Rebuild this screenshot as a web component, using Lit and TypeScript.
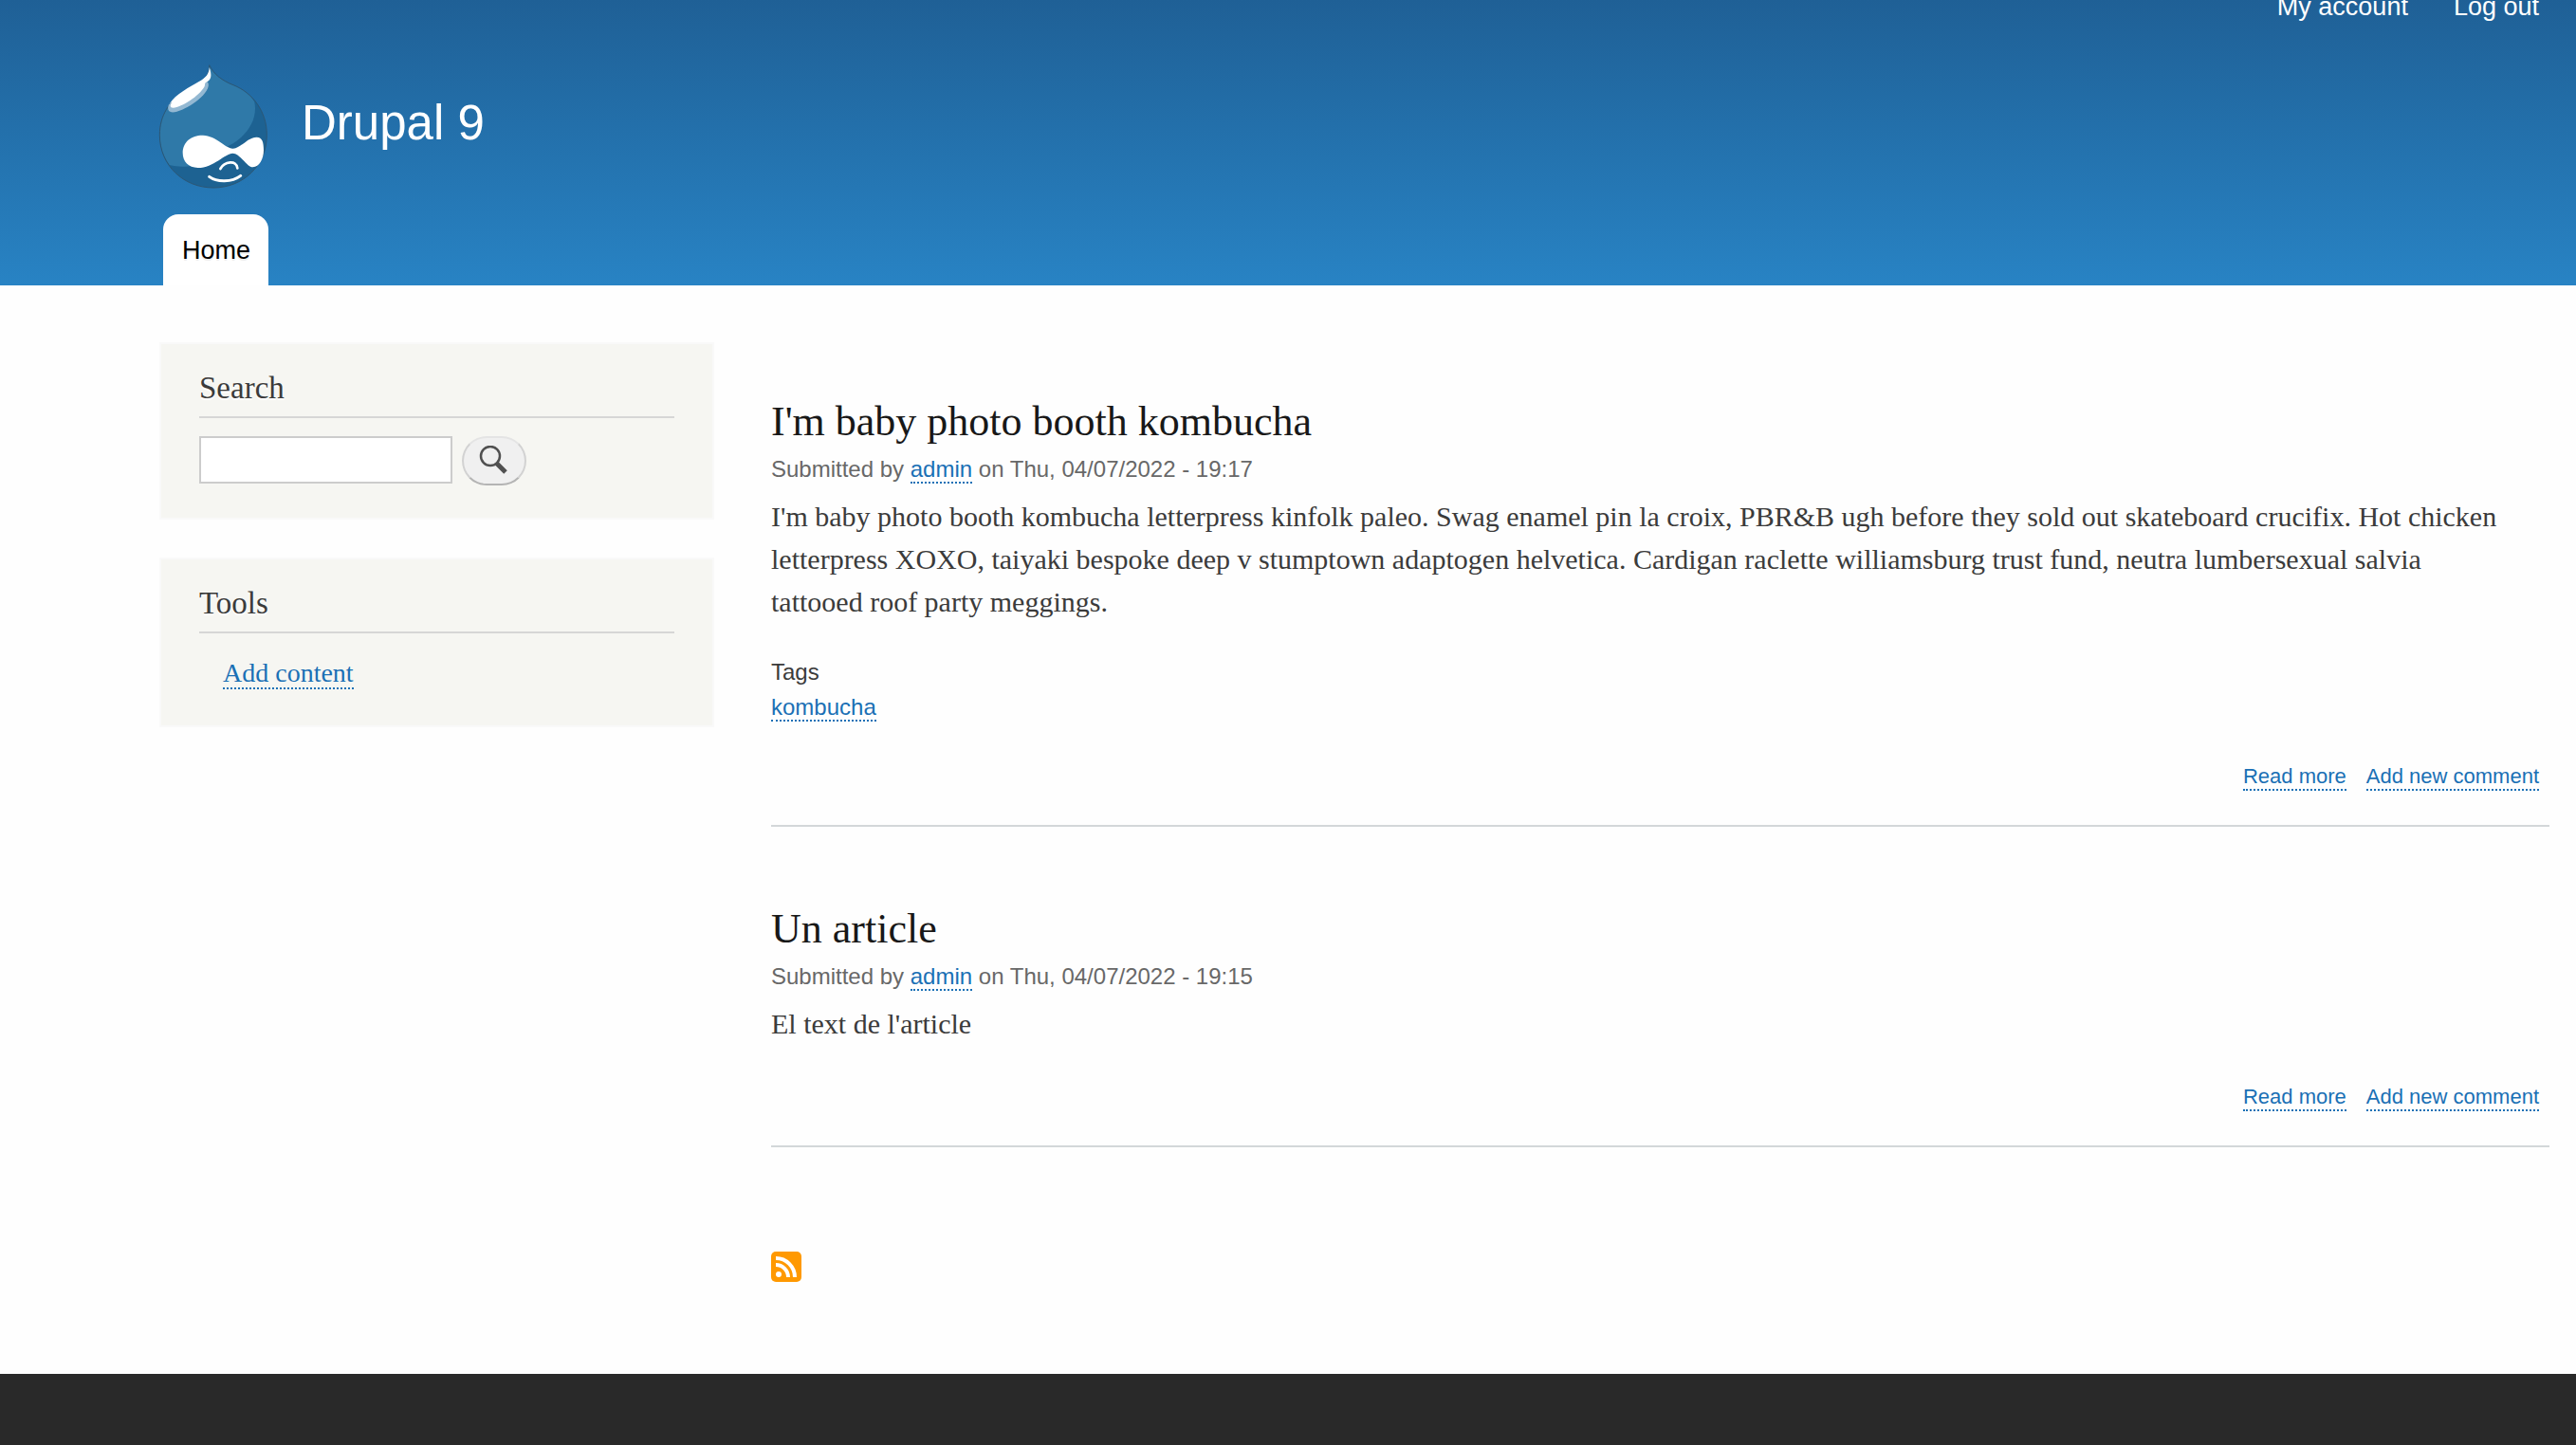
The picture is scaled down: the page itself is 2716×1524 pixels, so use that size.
import { LitElement, html, css, svg } from "lit";
import { customElement } from "lit/decorators.js";

interface Article {
  title: string;
  date: string;
  body: string;
  tags: string[];
}

const ARTICLES: Article[] = [
  {
    title: "I'm baby photo booth kombucha",
    date: "Thu, 04/07/2022 - 19:17",
    body: "I'm baby photo booth kombucha letterpress kinfolk paleo. Swag enamel pin la croix, PBR&B ugh before they sold out skateboard crucifix. Hot chicken letterpress XOXO, taiyaki bespoke deep v stumptown adaptogen helvetica. Cardigan raclette williamsburg trust fund, neutra lumbersexual salvia tattooed roof party meggings.",
    tags: ["kombucha"],
  },
  {
    title: "Un article",
    date: "Thu, 04/07/2022 - 19:15",
    body: "El text de l'article",
    tags: [],
  },
];

/* Druplicon, drawn in thirds of a pixel. */
const logo = svg`
  <path d="M182 25 C196 54 222 74 258 88 C318 112 364 170 364 246 C364 342 290 413 195 413 C100 413 25 342 25 246 C25 184 56 138 104 108 C140 88 184 78 182 25 Z" fill="#1d6292"/>
  <path d="M182 25 C196 54 222 74 258 88 C290 101 315 120 325 142 C336 200 300 250 246 279 L130 343 C100 348 80 346 56 341 C36 314 25 282 25 246 C25 184 56 138 104 108 C140 88 184 78 182 25 Z" fill="#2f79a8"/>
  <path d="M182 25 C196 54 222 74 258 88 C318 112 364 170 364 246 C364 342 290 413 195 413 C100 413 25 342 25 246 C25 184 56 138 104 108 C140 88 184 78 182 25 Z" fill="none" stroke="#2c5775" stroke-width="3"/>
  <path d="M166 78 C176 74 181 80 179 92 C172 128 92 178 62 174 C50 172 50 160 54 150 Z" fill="#93b8d2"/>
  <path d="M182 32 C191 58 189 72 172 79 C166 82 170 88 166 94 C150 122 96 158 68 160 C56 160 58 150 64 142 L56 148 C74 118 124 92 148 78 C172 64 181 54 182 32 Z" fill="#fff"/>
  <path d="M98 303 C98 266 128 246 162 247 C204 248 232 288 256 289 C282 290 300 254 332 253 C350 253 354 270 354 294 C354 322 340 348 320 348 C300 348 280 304 256 304 C232 304 196 350 146 350 C116 350 98 330 98 303 Z" fill="#fff"/>
  <path d="M217 353 C230 330 268 324 271 351" fill="none" stroke="#fff" stroke-width="8" stroke-linecap="round"/>
  <path d="M182 378 C206 396 254 396 281 375" fill="none" stroke="#fff" stroke-width="9" stroke-linecap="round"/>
`;

@customElement("app-root")
export class AppRoot extends LitElement {
  static styles = css`
    :host {
      display: flex;
      flex-direction: column;
      min-height: 100vh;
      background: #fefefe;
      color: #3b3b3b;
      font-family: "Liberation Sans", Helvetica, Arial, sans-serif;
      font-size: 24px;
      line-height: 36px;
      overflow: hidden;
    }
    *, *::before, *::after { box-sizing: border-box; }
    h1, h2, p, ul { margin: 0; padding: 0; font-weight: normal; }
    ul { list-style: none; }
    a { color: #1a70b5; text-decoration: none; }
    .link { border-bottom: 2px dotted #1a70b5; }

    .header {
      display: flex;
      flex-direction: column;
      padding: 0 39px 0 168px;
      background: linear-gradient(to bottom, #1f6096, #2883c4);
    }
    .account { display: flex; justify-content: flex-end; gap: 48px; height: 26px; font-size: 27px; line-height: 14px; }
    .account a { color: #fff; }
    .branding { display: flex; align-items: center; gap: 34px; height: 200px; }
    .logo { display: block; width: 116px; height: 130px; flex: none; }
    .site-name { font-size: 51px; line-height: 60px; padding-top: 8px; }
    .site-name a { color: #fff; }
    .home { display: flex; padding-top: 16px; }
    .tab {
      align-self: flex-start;
      margin-left: 4px;
      padding: 2px 19px 0 20px;
      border-radius: 16px 16px 0 0;
      background: #fff;
      color: #000;
      font-size: 27px;
      line-height: 73px;
      text-shadow: 0 2px #eee;
    }

    .main {
      flex: 1;
      display: grid;
      grid-template-columns: minmax(280px, 585fr) 1875fr;
      gap: 60px;
      align-items: start;
      padding: 60px 28px 97px 168px;
    }
    .sidebar { display: grid; gap: 40px; }
    .block {
      padding: 28px 40px 34px;
      border: 2px solid #f9f9f9;
      background: #f6f6f2;
      font-family: "Liberation Serif", Georgia, serif;
    }
    .block h2 {
      padding-bottom: 12px;
      border-bottom: 2px solid #d6d6d6;
      font-size: 33px;
      line-height: 36px;
      text-shadow: 0 2px #fff;
    }
    .search { display: flex; gap: 10px; padding-top: 19px; }
    .search input {
      width: 267px;
      height: 50px;
      padding: 4px 8px;
      border: 2px solid #ccc;
      background: #fff;
      font: inherit;
    }
    .search button {
      display: grid;
      place-items: center;
      width: 68px;
      height: 52px;
      padding: 0;
      border: 2px solid;
      border-color: #e4e4e4 #d2d2d2 #b4b4b4;
      border-radius: 26px;
      background: #f0f0f0;
    }
    .tools { padding: 28px 0 7px 25px; font-size: 28px; line-height: 28px; }

    .content { padding-top: 54px; }
    .article { padding-bottom: 36px; margin-bottom: 78px; border-bottom: 2px solid #d3d7d9; }
    .article h2 {
      font-family: "Liberation Serif", Georgia, serif;
      font-size: 44px;
      line-height: 60px;
    }
    .article h2 a { color: #181818; }
    .meta { padding-top: 2px; color: #686868; }
    .body {
      padding: 9px 40px 0 0;
      font-family: "Liberation Serif", Georgia, serif;
      font-size: 30px;
      line-height: 45px;
    }
    .tags { padding-top: 33px; line-height: 37px; }
    .actions {
      display: flex;
      justify-content: flex-end;
      gap: 21px;
      padding: 42px 11px 0 0;
      font-size: 22px;
      line-height: 26px;
    }
    .feed { display: block; width: 32px; height: 32px; margin-top: 110px; }
    .feed svg { display: block; }
    .footer { height: 75px; background: #292929; }
  `;

  private renderArticle(a: Article) {
    return html`
      <article class="article">
        <h2><a href="#">${a.title}</a></h2>
        <p class="meta">Submitted by <a class="link" href="#">admin</a> on ${a.date}</p>
        <p class="body">${a.body}</p>
        ${a.tags.length
          ? html`<div class="tags">
              <p>Tags</p>
              <ul>${a.tags.map((t) => html`<li><a class="link" href="#">${t}</a></li>`)}</ul>
            </div>`
          : null}
        <div class="actions">
          <a class="link" href="#">Read more</a>
          <a class="link" href="#">Add new comment</a>
        </div>
      </article>
    `;
  }

  render() {
    return html`
      <header class="header">
        <nav class="account" aria-label="User account">
          <a href="#">My account</a>
          <a href="#">Log out</a>
        </nav>
        <div class="branding">
          <a class="home" href="#" aria-label="Home">
            <svg class="logo" viewBox="24 26 348 390" overflow="visible">${logo}</svg>
          </a>
          <h1 class="site-name"><a href="#">Drupal 9</a></h1>
        </div>
        <a class="tab" href="#">Home</a>
      </header>
      <div class="main">
        <aside class="sidebar">
          <section class="block">
            <h2>Search</h2>
            <form class="search" role="search" @submit=${(e: Event) => e.preventDefault()}>
              <input type="search" aria-label="Search" />
              <button type="submit" aria-label="Search">
                <svg width="32" height="32" viewBox="0 0 32 32" fill="none" stroke="#505050">
                  <circle cx="12" cy="11" r="10" stroke-width="2.5" />
                  <path d="M18 18 L28 28" stroke-width="5" />
                </svg>
              </button>
            </form>
          </section>
          <section class="block">
            <h2>Tools</h2>
            <ul class="tools"><li><a class="link" href="#">Add content</a></li></ul>
          </section>
        </aside>
        <main class="content">
          ${ARTICLES.map((a) => this.renderArticle(a))}
          <a class="feed" href="#" aria-label="Subscribe">
            <svg width="32" height="32" viewBox="0 0 32 32">
              <rect width="32" height="32" rx="5" fill="#ff9900" />
              <circle cx="8" cy="24" r="3" fill="#fff" />
              <path d="M5 14 A13 13 0 0 1 18 27 M5 7 A20 20 0 0 1 25 27" fill="none" stroke="#fff" stroke-width="4" />
            </svg>
          </a>
        </main>
      </div>
      <footer class="footer"></footer>
    `;
  }
}
